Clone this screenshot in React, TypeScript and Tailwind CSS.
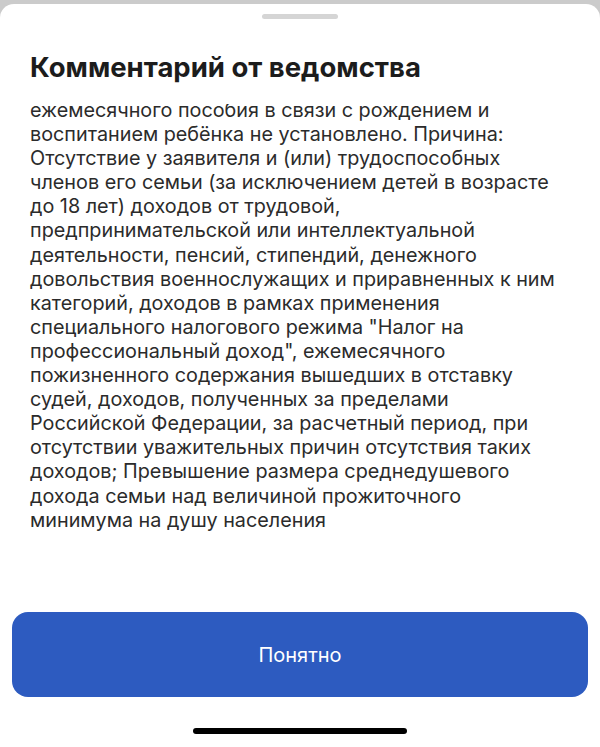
import React from 'react';

// Lines of the department's comment, kept as they wrap in the sheet
const commentLines: string[] = [
  'ежемесячного пособия в связи с рождением и',
  'воспитанием ребёнка не установлено. Причина:',
  'Отсутствие у заявителя и (или) трудоспособных',
  'членов его семьи (за исключением детей в возрасте',
  'до 18 лет) доходов от трудовой,',
  'предпринимательской или интеллектуальной',
  'деятельности, пенсий, стипендий, денежного',
  'довольствия военнослужащих и приравненных к ним',
  'категорий, доходов в рамках применения',
  'специального налогового режима "Налог на',
  'профессиональный доход", ежемесячного',
  'пожизненного содержания вышедших в отставку',
  'судей, доходов, полученных за пределами',
  'Российской Федерации, за расчетный период, при',
  'отсутствии уважительных причин отсутствия таких',
  'доходов; Превышение размера среднедушевого',
  'дохода семьи над величиной прожиточного',
  'минимума на душу населения',
];

const App: React.FC = () => {
  return (
    <div className="w-[600px] h-[747px] bg-[#cbcbcb] flex flex-col overflow-hidden font-['Inter','Noto_Sans',sans-serif]">
      {/* Bottom sheet */}
      <div className="mt-[4px] flex-1 flex flex-col bg-white rounded-t-[14px] min-h-0">
        {/* Grab handle */}
        <div className="mx-auto mt-[10px] w-[76px] h-[5px] rounded-full bg-[#d5d5d5]" />

        <h1 className="mt-[31px] px-[30px] text-[27.5px] leading-[34px] font-bold text-[#1c1c1c]">
          Комментарий от ведомства
        </h1>

        {/* Scrolled comment body */}
        <div className="mt-[20px] flex-1 min-h-0 overflow-hidden px-[30px]">
          <div className="-mt-[6px] text-[19.8px] leading-[24.1px] text-[#2b2b2b]">
            {commentLines.map((line, i) => (
              <div key={i} className="whitespace-nowrap">
                {line}
              </div>
            ))}
          </div>
        </div>

        {/* Action */}
        <div className="px-[12px]">
          <button className="w-full h-[85px] rounded-[16px] bg-[#2d5bc0] text-white text-[20px] font-normal">
            Понятно
          </button>
        </div>

        {/* Home indicator */}
        <div className="mx-auto mt-[31px] mb-[13px] w-[214px] h-[6px] rounded-full bg-black" />
      </div>
    </div>
  );
};

export default App;
